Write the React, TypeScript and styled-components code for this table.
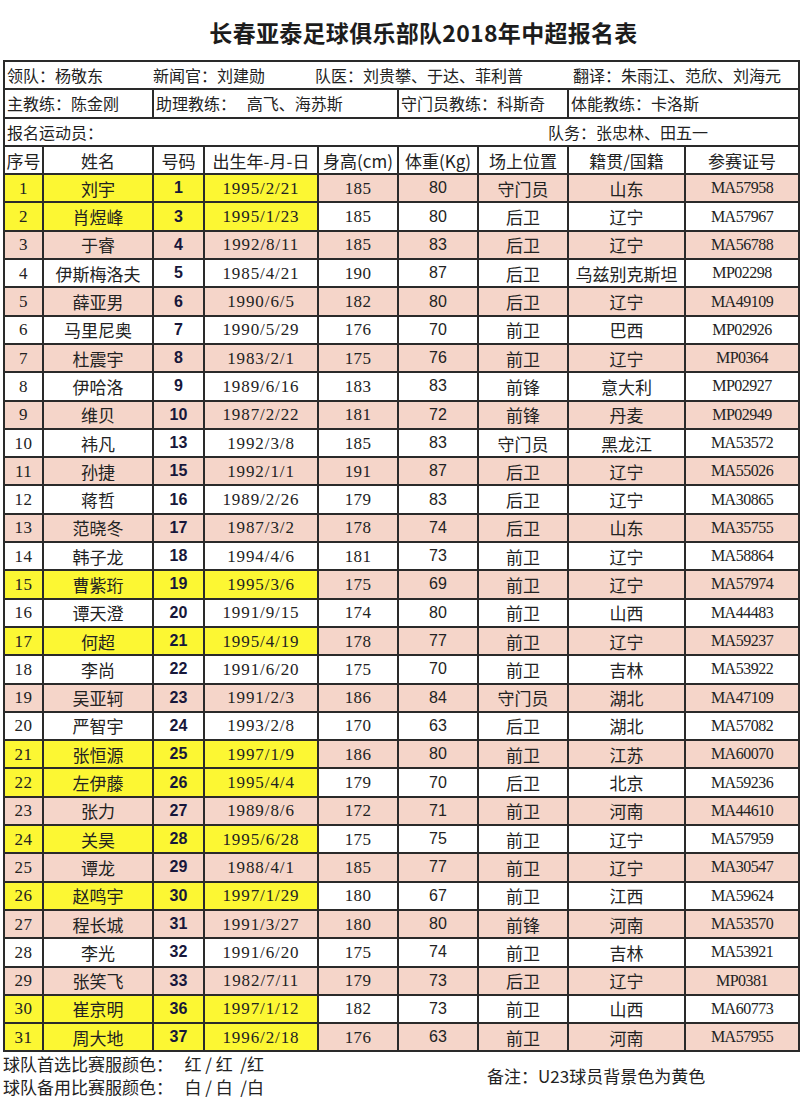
import React from "react";
import styled, { createGlobalStyle, css } from "styled-components";

const GlobalStyle = createGlobalStyle`
  html, body {
    margin: 0;
    padding: 0;
    background: #ffffff;
  }
  body {
    font-family: "Noto Sans CJK SC", "Noto Sans", sans-serif;
    color: #222;
  }
`;

const CJK = `"Noto Sans CJK SC", "Noto Sans", sans-serif`;
const SERIF = `"Liberation Serif", "Noto Sans CJK SC", serif`;
const SANS = `"Liberation Sans", "Noto Sans CJK SC", sans-serif`;

const Page = styled.div`
  width: 800px;
  box-sizing: border-box;
  padding: 0 2px 0 3px;
`;

const Title = styled.h1`
  margin: 17px 0 13px;
  padding-left: 46px;
  height: 30px;
  line-height: 30px;
  text-align: center;
  font-family: ${CJK};
  font-size: 23px;
  font-weight: 700;
  letter-spacing: 0.3px;
  color: #1c1c1c;
`;

const Sheet = styled.table`
  width: 795px;
  border-collapse: collapse;
  table-layout: fixed;
  border: 2px solid #2a2a2a;
`;

const Row = styled.tr`
  height: 28.3px;
`;

type Tone = "yellow" | "pink" | "white";
type Face = "cjk" | "serif" | "date" | "bold" | "sans" | "id";

const tones: Record<Tone, string> = {
  yellow: "#fcf733",
  pink: "#f5d5c9",
  white: "#ffffff",
};

const faces: Record<Face, ReturnType<typeof css>> = {
  cjk: css`
    font-family: ${CJK};
    font-size: 17px;
  `,
  serif: css`
    font-family: ${SERIF};
    font-size: 17px;
    letter-spacing: 0.4px;
  `,
  date: css`
    font-family: ${SERIF};
    font-size: 17px;
    letter-spacing: 0.9px;
  `,
  bold: css`
    font-family: ${SANS};
    font-size: 16px;
    font-weight: 700;
    color: #17173a;
  `,
  sans: css`
    font-family: ${SANS};
    font-size: 16px;
  `,
  id: css`
    font-family: ${SERIF};
    font-size: 16px;
    letter-spacing: -0.5px;
  `,
};

const Cell = styled.td<{ $tone?: Tone; $face?: Face }>`
  border: 2px solid #2a2a2a;
  padding: 0;
  text-align: center;
  vertical-align: middle;
  white-space: nowrap;
  overflow: hidden;
  line-height: 1;
  background: ${(p) => tones[p.$tone ?? "white"]};
  ${(p) => faces[p.$face ?? "cjk"]}
`;

const HeadCell = styled.th`
  border: 2px solid #2a2a2a;
  padding: 0;
  font-family: ${CJK};
  font-size: 17px;
  font-weight: 400;
  white-space: nowrap;
  line-height: 1;
  color: #222;
`;

const InfoCell = styled.td`
  border: 2px solid #2a2a2a;
  padding: 0 0 0 2px;
  font-family: ${CJK};
  font-size: 16px;
  line-height: 1;
  white-space: pre;
  text-align: left;
  vertical-align: middle;
`;

const InfoGrid = styled.div`
  display: grid;
  grid-template-columns: 146px 162px 258px 1fr;
`;

const InfoSplit = styled.div`
  display: flex;
  gap: 445px;
`;

const Footer = styled.div`
  display: flex;
  align-items: center;
  font-family: ${CJK};
  font-size: 17px;
  color: #222;
`;

const Colors = styled.div`
  flex: 0 0 484px;
  line-height: 23px;
  white-space: pre;
`;

const Note = styled.div`
  white-space: pre;
`;

type Player = [number, string, number, string, number, number, string, string, string, boolean?];

const players: Player[] = [
  [1, "刘宇", 1, "1995/2/21", 185, 80, "守门员", "山东", "MA57958", true],
  [2, "肖煜峰", 3, "1995/1/23", 185, 80, "后卫", "辽宁", "MA57967", true],
  [3, "于睿", 4, "1992/8/11", 185, 83, "后卫", "辽宁", "MA56788"],
  [4, "伊斯梅洛夫", 5, "1985/4/21", 190, 87, "后卫", "乌兹别克斯坦", "MP02298"],
  [5, "薛亚男", 6, "1990/6/5", 182, 80, "后卫", "辽宁", "MA49109"],
  [6, "马里尼奥", 7, "1990/5/29", 176, 70, "前卫", "巴西", "MP02926"],
  [7, "杜震宇", 8, "1983/2/1", 175, 76, "前卫", "辽宁", "MP0364"],
  [8, "伊哈洛", 9, "1989/6/16", 183, 83, "前锋", "意大利", "MP02927"],
  [9, "维贝", 10, "1987/2/22", 181, 72, "前锋", "丹麦", "MP02949"],
  [10, "祎凡", 13, "1992/3/8", 185, 83, "守门员", "黑龙江", "MA53572"],
  [11, "孙捷", 15, "1992/1/1", 191, 87, "后卫", "辽宁", "MA55026"],
  [12, "蒋哲", 16, "1989/2/26", 179, 83, "后卫", "辽宁", "MA30865"],
  [13, "范晓冬", 17, "1987/3/2", 178, 74, "后卫", "山东", "MA35755"],
  [14, "韩子龙", 18, "1994/4/6", 181, 73, "前卫", "辽宁", "MA58864"],
  [15, "曹紫珩", 19, "1995/3/6", 175, 69, "前卫", "辽宁", "MA57974", true],
  [16, "谭天澄", 20, "1991/9/15", 174, 80, "前卫", "山西", "MA44483"],
  [17, "何超", 21, "1995/4/19", 178, 77, "前卫", "辽宁", "MA59237", true],
  [18, "李尚", 22, "1991/6/20", 175, 70, "前卫", "吉林", "MA53922"],
  [19, "吴亚轲", 23, "1991/2/3", 186, 84, "守门员", "湖北", "MA47109"],
  [20, "严智宇", 24, "1993/2/8", 170, 63, "后卫", "湖北", "MA57082"],
  [21, "张恒源", 25, "1997/1/9", 186, 80, "前卫", "江苏", "MA60070", true],
  [22, "左伊藤", 26, "1995/4/4", 179, 70, "后卫", "北京", "MA59236", true],
  [23, "张力", 27, "1989/8/6", 172, 71, "前卫", "河南", "MA44610"],
  [24, "关昊", 28, "1995/6/28", 175, 75, "前卫", "辽宁", "MA57959", true],
  [25, "谭龙", 29, "1988/4/1", 185, 77, "前卫", "辽宁", "MA30547"],
  [26, "赵鸣宇", 30, "1997/1/29", 180, 67, "前卫", "江西", "MA59624", true],
  [27, "程长城", 31, "1991/3/27", 180, 80, "前锋", "河南", "MA53570"],
  [28, "李光", 32, "1991/6/20", 175, 74, "前卫", "吉林", "MA53921"],
  [29, "张笑飞", 33, "1982/7/11", 179, 73, "后卫", "辽宁", "MP0381"],
  [30, "崔京明", 36, "1997/1/12", 182, 73, "前卫", "山西", "MA60773", true],
  [31, "周大地", 37, "1996/2/18", 176, 63, "前卫", "河南", "MA57955", true],
];

const widths = [39, 110, 51, 114, 80, 80, 90, 117, 114];
const headers = ["序号", "姓名", "号码", "出生年-月-日", "身高(cm)", "体重(Kg)", "场上位置", "籍贯/国籍", "参赛证号"];

const PlayerRow = ({ p }: { p: Player }) => {
  const [no, name, shirt, born, height, weight, pos, origin, id, u23] = p;
  const rest: Tone = no % 2 === 1 ? "pink" : "white";
  const front: Tone = u23 ? "yellow" : rest;
  return (
    <Row>
      <Cell $tone={front} $face="serif">{no}</Cell>
      <Cell $tone={front} $face="cjk">{name}</Cell>
      <Cell $tone={front} $face="bold">{shirt}</Cell>
      <Cell $tone={front} $face="date">{born}</Cell>
      <Cell $tone={rest} $face="serif">{height}</Cell>
      <Cell $tone={rest} $face="sans">{weight}</Cell>
      <Cell $tone={rest} $face="cjk">{pos}</Cell>
      <Cell $tone={rest} $face="cjk">{origin}</Cell>
      <Cell $tone={rest} $face="id">{id}</Cell>
    </Row>
  );
};

export default function App() {
  return (
    <Page>
      <GlobalStyle />
      <Title>长春亚泰足球俱乐部队2018年中超报名表</Title>
      <Sheet>
        <colgroup>
          {widths.map((w, i) => (
            <col key={i} style={{ width: w }} />
          ))}
        </colgroup>
        <tbody>
          <Row>
            <InfoCell colSpan={9}>
              <InfoGrid>
                <span>领队：杨敬东</span>
                <span>新闻官：刘建勋</span>
                <span>队医：刘贵攀、于达、菲利普</span>
                <span>翻译：朱雨江、范欣、刘海元</span>
              </InfoGrid>
            </InfoCell>
          </Row>
          <Row>
            <InfoCell colSpan={2}>主教练：陈金刚</InfoCell>
            <InfoCell colSpan={3}>{"助理教练：   高飞、海苏斯"}</InfoCell>
            <InfoCell colSpan={2}>守门员教练：科斯奇</InfoCell>
            <InfoCell colSpan={2}>体能教练：卡洛斯</InfoCell>
          </Row>
          <Row>
            <InfoCell colSpan={9}>
              <InfoSplit>
                <span>报名运动员：</span>
                <span>队务：张忠林、田五一</span>
              </InfoSplit>
            </InfoCell>
          </Row>
          <Row>
            {headers.map((h) => (
              <HeadCell key={h}>{h}</HeadCell>
            ))}
          </Row>
          {players.map((p) => (
            <PlayerRow key={p[0]} p={p} />
          ))}
        </tbody>
      </Sheet>
      <Footer>
        <Colors>
          {"球队首选比赛服颜色：   红 / 红  /红\n球队备用比赛服颜色：   白 / 白  /白"}
        </Colors>
        <Note>备注：U23球员背景色为黄色</Note>
      </Footer>
    </Page>
  );
}
